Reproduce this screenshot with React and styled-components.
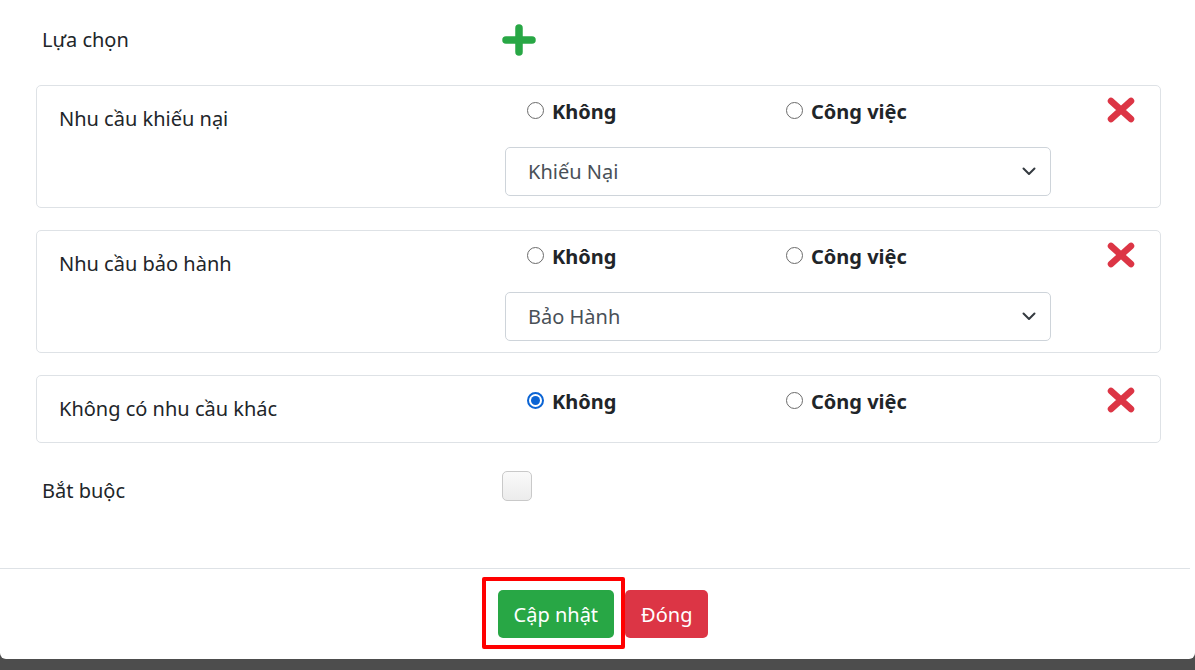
import React from "react";
import styled, { createGlobalStyle } from "styled-components";

const GlobalStyle = createGlobalStyle`
  html, body {
    margin: 0;
    padding: 0;
    background: #4d4d4d;
  }
  body {
    font-family: "Noto Sans", "Open Sans", sans-serif;
    color: #212529;
  }
`;

const Modal = styled.div`
  width: 1195px;
  height: 659px;
  background: #fff;
  display: flex;
  flex-direction: column;
  border-bottom-left-radius: 6px;
  border-bottom-right-radius: 6px;
`;

const Body = styled.div`
  padding: 24px 34px 0 36px;
  flex: 1;
`;

const TopRow = styled.div`
  display: grid;
  grid-template-columns: 460px 1fr;
  align-items: center;
  padding-left: 6px;
  height: 30px;
  margin-bottom: 31px;
`;

const Label = styled.div`
  font-size: 20px;
  line-height: 30px;
`;

const Cards = styled.div`
  display: flex;
  flex-direction: column;
  gap: 22px;
`;

const Card = styled.div`
  border: 1px solid #dee2e6;
  border-radius: 5px;
  padding: 9px 22px 11px;
  display: grid;
  grid-template-columns: 446px 546px 1fr;
  align-items: start;
`;

const CardLabel = styled.div`
  font-size: 20px;
  line-height: 30px;
  padding: 9px 0 7px;
`;

const Middle = styled.div`
  display: flex;
  flex-direction: column;
`;

const RadioRow = styled.div`
  display: grid;
  grid-template-columns: 259px 1fr;
  padding-left: 22px;
  margin-top: 2px;
  height: 30px;
  align-items: center;
`;

const RadioLabel = styled.label`
  display: flex;
  align-items: center;
  gap: 8px;
  font-size: 20px;
  font-weight: 700;
  line-height: 30px;
  color: #212529;
`;

const RadioDot = styled.span`
  width: 17px;
  height: 17px;
  box-sizing: border-box;
  border-radius: 50%;
  border: ${(p) => (p.checked ? "2px solid #0b64d4" : "1px solid #6b6b6b")};
  background: #fff;
  display: flex;
  align-items: center;
  justify-content: center;
  margin-top: -4px;

  &::after {
    content: "";
    display: ${(p) => (p.checked ? "block" : "none")};
    width: 9px;
    height: 9px;
    border-radius: 50%;
    background: #0b64d4;
  }
`;

const Select = styled.div`
  margin-top: 20px;
  height: 49px;
  box-sizing: border-box;
  border: 1px solid #ced4da;
  border-radius: 5px;
  padding: 0 14px 0 22px;
  display: flex;
  align-items: center;
  justify-content: space-between;
  font-size: 20px;
  color: #495057;
`;

const RemoveCell = styled.div`
  display: flex;
  justify-content: flex-start;
  padding-top: 2px;
  padding-left: 56px;
`;

const CheckRow = styled.div`
  display: grid;
  grid-template-columns: 460px 1fr;
  align-items: center;
  padding-left: 6px;
  margin-top: 33px;
`;

const CheckBox = styled.span`
  display: block;
  width: 30px;
  height: 30px;
  box-sizing: border-box;
  border: 1px solid #c9c9c9;
  border-radius: 5px;
  background: linear-gradient(#fafafa, #ececec);
  margin-top: -10px;
`;

const Footer = styled.div`
  border-top: 1px solid #dee2e6;
  height: 91px;
  box-sizing: border-box;
  display: flex;
  justify-content: center;
  align-items: flex-start;
  padding: 8px 0 0 0;
  margin-right: 5px;
`;

const Highlight = styled.span`
  display: inline-flex;
  border: 4px solid #ff0000;
  border-radius: 2px;
  padding: 9px 7px 7px 12px;
`;

const Button = styled.button`
  height: 48px;
  border: none;
  border-radius: 5px;
  padding: 0 16px;
  font-family: inherit;
  font-size: 20px;
  color: #fff;
  background: ${(p) => (p.variant === "danger" ? "#dc3545" : "#28a745")};
  margin-top: ${(p) => (p.variant === "danger" ? "13px" : "0")};
`;

const PlusIcon = () => (
  <svg width="34" height="32" viewBox="0 0 34 32">
    <path d="M17 4 V28 M4 16 H30" stroke="#28a745" strokeWidth="7.5" strokeLinecap="round" />
  </svg>
);

const XIcon = () => (
  <svg width="28" height="26" viewBox="0 0 28 26">
    <path d="M4 4 L24 22 M24 4 L4 22" stroke="#dc3545" strokeWidth="6.5" strokeLinecap="round" />
  </svg>
);

const Chevron = () => (
  <svg width="14" height="9" viewBox="0 0 14 9">
    <path d="M1.5 1.5 L7 7 L12.5 1.5" fill="none" stroke="#343a40" strokeWidth="2" strokeLinecap="round" strokeLinejoin="round" />
  </svg>
);

const options = [
  { label: "Nhu cầu khiếu nại", value: "cong", select: "Khiếu Nại" },
  { label: "Nhu cầu bảo hành", value: "cong", select: "Bảo Hành" },
  { label: "Không có nhu cầu khác", value: "khong", select: null },
];

const App = () => {
  return (
    <>
      <GlobalStyle />
      <Modal>
        <Body>
          <TopRow>
            <Label>Lựa chọn</Label>
            <PlusIcon />
          </TopRow>
          <Cards>
            {options.map((o, i) => (
              <Card key={i}>
                <CardLabel>{o.label}</CardLabel>
                <Middle>
                  <RadioRow>
                    <RadioLabel>
                      <RadioDot checked={o.value === "khong"} />
                      Không
                    </RadioLabel>
                    <RadioLabel>
                      <RadioDot checked={false} />
                      Công việc
                    </RadioLabel>
                  </RadioRow>
                  {o.select && (
                    <Select>
                      {o.select}
                      <Chevron />
                    </Select>
                  )}
                </Middle>
                <RemoveCell>
                  <XIcon />
                </RemoveCell>
              </Card>
            ))}
          </Cards>
          <CheckRow>
            <Label>Bắt buộc</Label>
            <CheckBox />
          </CheckRow>
        </Body>
        <Footer>
          <Highlight>
            <Button>Cập nhật</Button>
          </Highlight>
          <Button variant="danger">Đóng</Button>
        </Footer>
      </Modal>
    </>
  );
};

export default App;
